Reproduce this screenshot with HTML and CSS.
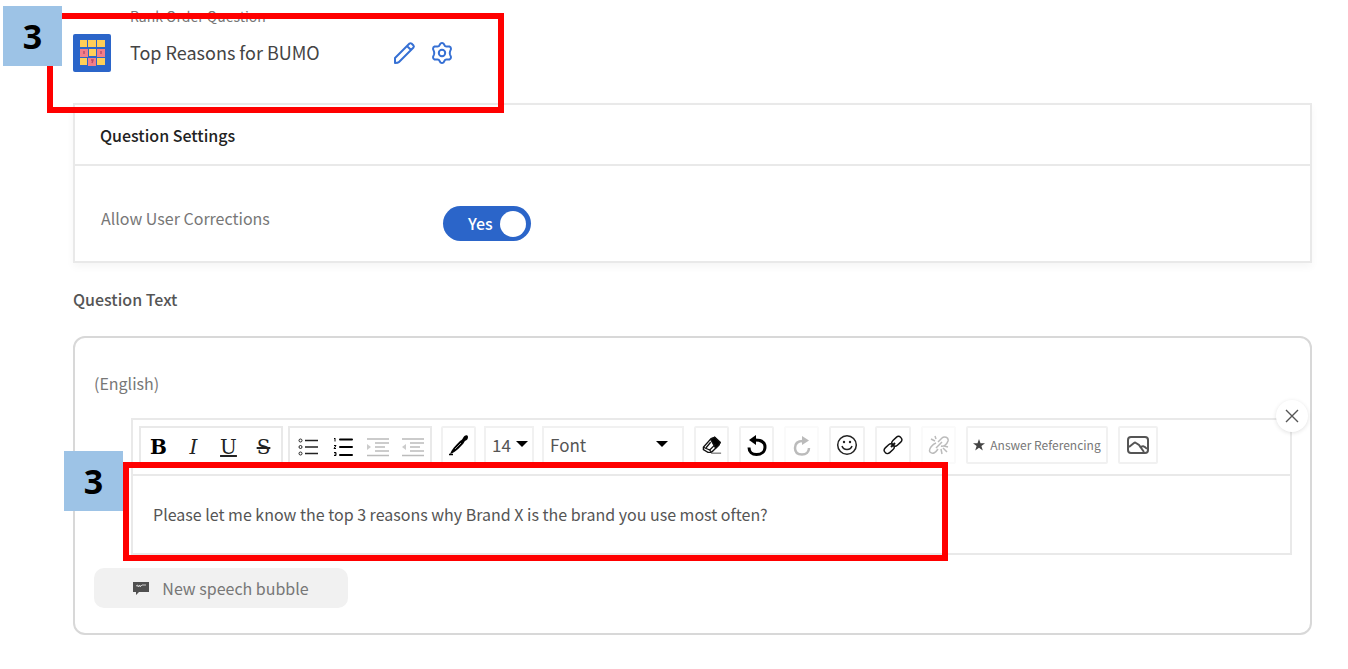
FILE: index.html
```html
<!DOCTYPE html>
<html lang="en">
<head>
<meta charset="utf-8">
<title>Top Reasons for BUMO</title>
<link rel="stylesheet" href="styles.css">
</head>
<body>
<main class="page">
  <header class="question-head">
    <svg class="type-icon" viewBox="0 0 38 38" aria-hidden="true">
      <rect width="38" height="38" rx="2" fill="#2b65c9"/>
      <g fill="#ffcf57">
        <rect x="7" y="6" width="7" height="7"/><rect x="15" y="6" width="8" height="7"/><rect x="24" y="6" width="8" height="7"/>
        <rect x="16" y="15" width="7" height="7"/>
        <rect x="7" y="24" width="7" height="7"/><rect x="24" y="24" width="8" height="7"/>
      </g>
      <g fill="#f27f89">
        <rect x="7" y="15" width="8" height="8"/><rect x="24" y="15" width="8" height="8"/><rect x="15" y="24" width="8" height="8"/>
      </g>
      <path d="M11 17v3M28 17v3M18 26h2l-1 3" fill="none" stroke="#b84b68" stroke-width="1.4"/>
    </svg>
    <div class="question-names">
      <p class="question-type">Rank Order Question</p>
      <h1 class="question-title">Top Reasons for BUMO</h1>
    </div>
    <div class="head-actions">
      <button class="plain" type="button" aria-label="Edit title">
        <svg width="24" height="24" viewBox="0 0 24 24" fill="none" stroke="#3670d4" stroke-width="2" stroke-linejoin="round"><path d="M3 22v-5L17.500 2.500q1-.7 2 0l2 2q.8 1 0 2L7 21q-1 1-4 1zM15 5l4 4"/></svg>
      </button>
      <button class="plain" type="button" aria-label="Question settings">
        <svg width="24" height="24" viewBox="0 0 24 24" fill="none" stroke="#3670d4" stroke-width="2" stroke-linejoin="round"><path d="M10.500 2.500q1.500-1 3 0L15 5q1 .8 2 .5l2.500 0q1.500.5 1.500 2.500l-1 2.500q-.5 1.500 0 3l1 2.500q0 2-1.500 2.500H17q-1-.3-2 .5l-1.500 2.500q-1.500 1-3 0L9 19q-1-.8-2-.5H4.500Q3 18 3 16l1-2.500q.5-1.500 0-3L3 8q0-2 1.500-2.500H7Q8 5.800 9 5z"/><circle cx="12" cy="12" r="3.200"/></svg>
      </button>
    </div>
    <div class="callout callout-title"><span class="callout-number">3</span></div>
  </header>

  <section class="settings">
    <h2 class="settings-title">Question Settings</h2>
    <div class="settings-row">
      <label class="settings-label" for="corrections">Allow User Corrections</label>
      <span class="toggle">
        <input class="toggle-input" id="corrections" type="checkbox" checked>
        <span class="toggle-text" aria-hidden="true">Yes</span>
        <span class="toggle-knob" aria-hidden="true"></span>
      </span>
    </div>
  </section>

  <h2 class="section-title">Question Text</h2>

  <section class="panel">
    <p class="language">(English)</p>
    <div class="editor">
      <button class="close" type="button" aria-label="Close"><svg width="14" height="14" viewBox="0 0 14 14" stroke="#555" stroke-width="1.400"><path d="M1 1l12 12M13 1L1 13"/></svg></button>
      <div class="toolbar">
        <div class="group">
          <button class="plain tool letter bold" type="button" aria-label="Bold">B</button>
          <button class="plain tool letter italic" type="button" aria-label="Italic">I</button>
          <button class="plain tool letter underline" type="button" aria-label="Underline">U</button>
          <button class="plain tool letter strike" type="button" aria-label="Strikethrough">S</button>
        </div>
        <div class="group">
          <button class="plain tool" type="button" aria-label="Bulleted list"><svg width="20" height="20" viewBox="0 0 20 20" fill="none" stroke="#222"><path d="M7 3.500h13M7 10h13M7 16.500h13" stroke-width="1.300"/><circle cx="2.500" cy="3.500" r="1.500"/><circle cx="2.500" cy="10" r="1.500"/><circle cx="2.500" cy="16.500" r="1.500"/></svg></button>
          <button class="plain tool" type="button" aria-label="Numbered list"><svg width="20" height="20" viewBox="0 0 20 20" fill="none" stroke="#000"><path d="M7 2.500h12M7 10h12M7 18h12" stroke-width="2" stroke-linecap="round"/><path d="M1 2l1-1v3.500M1 8.500h2l-2 3h2M1 15.500h2v3H1M1.500 17h1.500"/></svg></button>
          <button class="plain tool" type="button" aria-label="Indent" disabled><svg width="24" height="20" viewBox="0 0 24 20" fill="none" stroke="#bbb" stroke-width="1.500"><path d="M1 2h22M1 18.500h22"/><path d="M9 6h14M9 10h10M9 14h14" stroke="#ccc" stroke-width="2"/><path d="M1 7l4 3-4 3z" fill="#ccc" stroke="none"/></svg></button>
          <button class="plain tool" type="button" aria-label="Outdent" disabled><svg width="24" height="20" viewBox="0 0 24 20" fill="none" stroke="#bbb" stroke-width="1.500"><path d="M1 2h22M1 18.500h22"/><path d="M9 6h14M9 10h10M9 14h14" stroke="#ccc" stroke-width="2"/><path d="M5 7l-4 3 4 3z" fill="#ccc" stroke="none"/></svg></button>
        </div>
        <div class="tools tools-text">
          <button class="box" type="button" aria-label="Text colour"><svg width="22" height="22" viewBox="0 0 22 22"><path d="M2 20c2-5 5-8 10-13 1-1 2-1 3-3 1-3 5-4 5-1 0 2-1 3-3 4-1 1-1 2-2 3-4 4-7 8-13 10z" fill="#000"/><path d="M7 15l6-6" stroke="#999"/><path d="M1 20.500h4" stroke="#000" stroke-width="1.500"/></svg></button>
          <span class="pick pick-size"><select class="select" aria-label="Font size"><option>14</option></select><svg class="caret" width="12" height="6" viewBox="0 0 12 6" aria-hidden="true"><path d="M0 0h12L6 6z"/></svg></span>
          <span class="pick pick-font"><select class="select" aria-label="Font family"><option>Font</option></select><svg class="caret" width="12" height="6" viewBox="0 0 12 6" aria-hidden="true"><path d="M0 0h12L6 6z"/></svg></span>
        </div>
        <div class="tools">
          <button class="box" type="button" aria-label="Clear formatting"><svg width="20" height="20" viewBox="0 0 22 22" fill="none" stroke="#111" stroke-width="1.400"><path d="M1.500 13.500L10 4l4-1.500 6 5.500-1.500 3-8 8H6.500l-5-3z" fill="#fff"/><path d="M9.500 5l4.500-2.500L20 8l-1.500 3-3.500 3.500z" fill="#000"/><path d="M1.500 13.500l7 3L15 10M8.500 16.500l2 2.500M4.500 14l5-6"/><path d="M10 20h11" stroke="#777"/></svg></button>
          <button class="box" type="button" aria-label="Undo"><svg width="22" height="22" viewBox="0 0 22 22" fill="none" stroke="#000" stroke-width="3"><path d="M9 6c6 0 10 2 10 7s-4 7.500-8.500 7.500S3 18 3 13.500"/><path d="M10 1v10L3 6z" fill="#000" stroke="none"/></svg></button>
          <button class="box faint" type="button" aria-label="Redo" disabled><svg width="22" height="22" viewBox="0 0 22 22" fill="none" stroke="#bbb" stroke-width="2.500"><path d="M12 7C7 7 4 9.500 4 14s3 6.500 7 6.500 7-2.500 7-6.500"/><path d="M11 2v9l7-4.500z" fill="#bbb" stroke="none"/></svg></button>
          <button class="box box-wide" type="button" aria-label="Emoji"><svg width="22" height="22" viewBox="0 0 22 22" fill="none" stroke="#222" stroke-width="1.500"><circle cx="11" cy="11" r="9.300"/><path d="M6 12c1.500 4.500 8.500 4.500 10 0"/><g fill="#222" stroke="none"><circle cx="8" cy="8" r="1.200"/><circle cx="14" cy="8" r="1.200"/></g></svg></button>
          <button class="box box-wide" type="button" aria-label="Link"><svg width="22" height="22" viewBox="0 0 22 22" fill="none" stroke="#111" stroke-width="1.400"><rect x="9.500" y="4" width="11" height="6.500" rx="3.200" transform="rotate(-43 15 7.500)"/><rect x="1.500" y="11.500" width="11" height="6.500" rx="3.200" transform="rotate(-43 7 14.500)"/><path d="M9 13l4-4" stroke-width="2"/></svg></button>
          <button class="box faint" type="button" aria-label="Unlink" disabled><svg width="22" height="22" viewBox="0 0 22 22" fill="none" stroke="#bbb" stroke-width="1.500"><path d="M10 8l4-4c2-2 7-1 6 3-1 3-4 6-7 5M8 9c-3 1-8 6-6 9 3 3 6 0 8-3M8 14l6-6M3 5l4 2M7 2l1 3M13 15l1 5M15 14l4 4M16 12l4 1"/></svg></button>
        </div>
        <div class="tools">
          <button class="box reference" type="button"><svg width="12" height="12" viewBox="0 0 12 12" aria-hidden="true"><path d="M6 0l1.500 4.300H12L8.400 7l1.400 4.500L6 8.800l-3.800 2.700L3.600 7 0 4.300h4.500z" fill="#444"/></svg>Answer Referencing</button>
          <button class="box image" type="button" aria-label="Insert image"><svg width="22" height="18" viewBox="0 0 22 18" fill="none" stroke="#555" stroke-width="2"><rect x="1" y="1" width="20" height="16" rx="3"/><path d="M2 11l5-4q1-.8 2 0l3 2 5 7M13 12q3-4 7 1"/></svg></button>
        </div>
      </div>
      <div class="content" contenteditable="true" role="textbox" aria-label="Question text">Please let me know the top 3 reasons why Brand X is the brand you use most often?</div>
      <div class="callout callout-text"><span class="callout-number">3</span></div>
    </div>
    <button class="bubble" type="button"><svg width="16" height="14" viewBox="0 0 16 14" aria-hidden="true"><path d="M0 1h16v10H6l-3 3v-3H0z" fill="#505050"/><path d="M3 5l2-1v2l2-2v2l2-2h4" fill="none" stroke="#ccc"/></svg>New speech bubble</button>
  </section>
</main>
</body>
</html>
```
FILE: styles.css
```css
* { box-sizing: border-box; }

body {
  margin: 0;
  background: #fff;
  color: #555;
  font-family: "Noto Sans CJK SC", "Open Sans", sans-serif;
  font-size: 16px;
  line-height: 24px;
}

h1, h2, p { margin: 0; }

button, select { font: inherit; color: inherit; }

.plain {
  display: inline-flex;
  align-items: center;
  justify-content: center;
  padding: 0;
  border: 0;
  background: none;
}

.page { padding: 5px 36px 34px 73px; }

/* Question header */
.question-head {
  position: relative;
  display: flex;
  align-items: flex-end;
  height: 98px;
  padding-bottom: 31px;
}
.type-icon { width: 38px; height: 38px; }
.question-names { width: 281px; padding-left: 19px; }
.question-type { font-size: 14px; color: #777; }
.question-title {
  margin-top: 4px;
  font-size: 18px;
  font-weight: 400;
  line-height: 40px;
  color: #444;
}
.head-actions {
  display: flex;
  align-items: center;
  gap: 14px;
  height: 38px;
}

/* Numbered outlines */
.callout {
  position: absolute;
  z-index: 2;
  border: 6px solid #f00;
  pointer-events: none;
}
.callout-number {
  position: absolute;
  display: flex;
  align-items: center;
  justify-content: center;
  width: 59px;
  height: 60px;
  background: #9dc3e6;
  color: #000;
  font-family: "Open Sans", "Noto Sans", sans-serif;
  font-size: 34px;
  font-weight: 700;
}
.callout-title { top: 8px; left: -26px; width: 457px; height: 100px; }
.callout-title .callout-number { top: -13px; left: -50px; }
.callout-text { top: 42px; left: -10px; width: 825px; height: 99px; }
.callout-text .callout-number { top: -17px; left: -65px; }

/* Settings card */
.settings {
  border: 2px solid #e9e9e9;
  box-shadow: 0 4px 8px rgba(0, 0, 0, .04);
}
.settings-title {
  padding: 18px 25px 17px;
  border-bottom: 2px solid #e9e9e9;
  font-size: 16px;
  font-weight: 500;
  color: #222;
}
.settings-row {
  display: flex;
  align-items: flex-start;
  height: 95px;
  padding: 40px 26px 20px;
}
.settings-label { width: 342px; color: #777; }
.toggle { position: relative; display: block; width: 88px; height: 35px; }
.toggle-input {
  appearance: none;
  width: 100%;
  height: 100%;
  margin: 0;
  border-radius: 18px;
  background: #2b65c9;
}
.toggle-text {
  position: absolute;
  top: 5px;
  left: 25px;
  font-weight: 500;
  color: #fff;
  pointer-events: none;
}
.toggle-knob {
  position: absolute;
  top: 5px;
  right: 5px;
  width: 26px;
  height: 26px;
  border-radius: 50%;
  background: #fff;
  pointer-events: none;
}

.section-title {
  margin: 24px 0 25px;
  font-size: 16px;
  font-weight: 500;
  color: #555;
}

/* Editor */
.panel {
  padding: 33px 18px 25px 19px;
  border: 2px solid #d8d8d8;
  border-radius: 12px;
}
.language { color: #777; }
.editor {
  position: relative;
  margin: 23px 0 13px 37px;
  border: 2px solid #e9e9e9;
}
.close {
  position: absolute;
  z-index: 1;
  top: -20px;
  right: -18px;
  display: flex;
  align-items: center;
  justify-content: center;
  width: 32px;
  height: 32px;
  padding: 0;
  border: 0;
  border-radius: 50%;
  background: #fff;
  box-shadow: 0 1px 4px rgba(0, 0, 0, .12);
}
.toolbar {
  display: flex;
  align-items: flex-start;
  gap: 5px;
  height: 56px;
  padding: 6px;
  border-bottom: 2px solid #e9e9e9;
}
.group {
  display: flex;
  height: 40px;
  border: 2px solid #e9e9e9;
}
.tool { width: 35px; height: 38px; color: #222; }
.letter { font-family: "DejaVu Serif", serif; font-size: 20px; }
.bold { font-weight: 700; color: #000; }
.italic { font-style: italic; }
.underline { text-decoration: underline; }
.strike { text-decoration: line-through; }
.tools { display: flex; gap: 10px; padding-left: 5px; }
.tools-text { gap: 8px; padding-left: 4px; }
.box {
  display: flex;
  align-items: center;
  justify-content: center;
  width: 35px;
  height: 38px;
  padding: 0;
  border: 2px solid #f1f1f1;
  border-radius: 2px;
  background: #fff;
}
.box-wide { width: 36px; }
.faint { border-color: #fafafa; }
.pick {
  position: relative;
  height: 38px;
  border: 2px solid #f1f1f1;
}
.pick-size { width: 50px; }
.pick-font { width: 142px; }
.select {
  appearance: none;
  width: 100%;
  height: 34px;
  padding: 0 6px;
  border: 0;
  background: none;
  font-size: 17px;
}
.caret { position: absolute; top: 13px; right: 4px; pointer-events: none; }
.pick-font .caret { right: 14px; }
.reference {
  gap: 5px;
  width: 142px;
  font-size: 12px;
  color: #777;
}
.image { width: 40px; }
.content { min-height: 77px; padding: 26px 20px; outline: 0; }
.bubble {
  display: flex;
  align-items: center;
  justify-content: center;
  gap: 13px;
  width: 254px;
  height: 40px;
  padding: 0;
  border: 0;
  border-radius: 10px;
  background: #f1f1f1;
  color: #777;
}
```
